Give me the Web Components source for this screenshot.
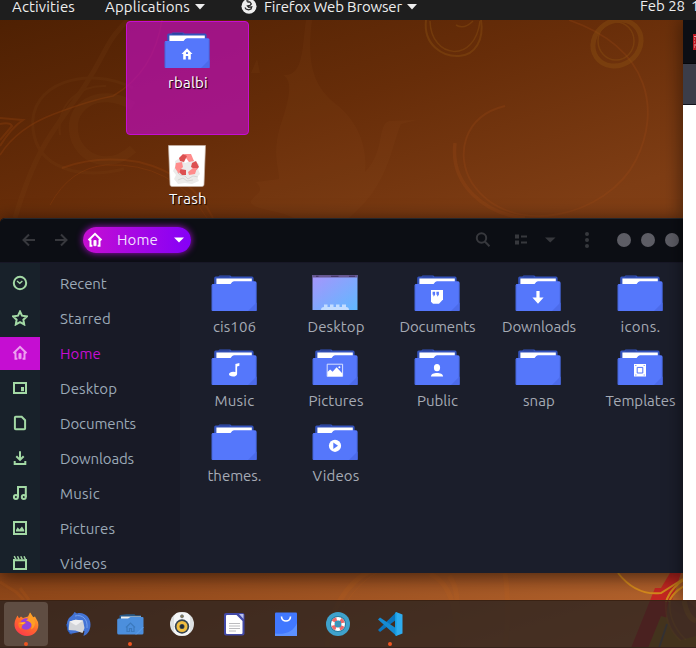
<!DOCTYPE html>
<html lang="en">
<head>
<meta charset="utf-8">
<title>Desktop</title>
<style>
html,body{margin:0;width:696px;height:648px;overflow:hidden;background:#6b2f0a}
body{font:15px/20px Ubuntu,"Noto Sans",sans-serif}
</style>
</head>
<body>
<desk-top></desk-top>
<script>
const define = (name, html, after) => customElements.define(name, class extends HTMLElement {
  connectedCallback() {
    if (this.shadowRoot) return;
    const root = this.attachShadow({mode: 'open'});
    root.innerHTML = typeof html === 'function' ? html(this) : html;
    if (after) after(this, root);
  }
});

/* Text line tracked to a given advance width */
define('fit-text', e => `<style>:host{display:block;white-space:pre;flex:none}span{display:inline-block}</style><span>${e.getAttribute('text')}</span>`, (e, root) => {
  const s = root.querySelector('span'), w = +e.getAttribute('w'), n = e.getAttribute('text').length;
  const gap = (w - s.getBoundingClientRect().width) / n;
  s.style.letterSpacing = gap + 'px';
  e.style.width = w + 'px';
});

const marks = {
  none: '',
  home: '<path d="M17.5 22 23 16.2l5.5 5.8h-1.7v5.500h-2.600V24h-2.400v3.500h-2.600V22z"/><path d="M22 20.300h2v1.800h-2z" fill="#5577fb"/>',
  docs: '<path d="M17 15h12v9.500l-4 4.200h-6l-2-2z"/><path d="M18.600 16.800h2.500v3l-1.200 1.400h-.7l.4-1.400h-1zM22.400 16.800h2.500v3l-1.200 1.400H23l.4-1.400h-1z" fill="#5577fb"/>',
  down: '<path d="M21.400 16h3.200v6.500h4L23 28.700l-5.600-6.200h4z"/>',
  music: '<path d="M24.400 15l4-1v2.800l-2.300.7v7.400c0 1.500-1.700 2.600-4 2.600-2.500 0-4.100-.9-4.100-2.200 0-1.500 2-2.500 4.200-2.500l2.200.3z"/>',
  pics: '<path d="M15.200 15.200h15.400v12.200H15.200z" fill="none" stroke="#dbe2ff" stroke-width="1"/><path d="M15.500 27v-4l2.600-2.500 2.500 2.200 4-4.400 5.800 6.200V27z"/><circle cx="27.400" cy="18.300" r="1"/>',
  user: '<ellipse cx="23" cy="18.700" rx="3.100" ry="3.600"/><path d="M16.900 27.500c0-2.500 3-3.600 6.100-3.600s6.100 1.100 6.100 3.600z"/>',
  tmpl: '<path d="M17 15h12v12.500H17z"/><path d="M20.200 18.400h5.600v5.600h-5.600z" fill="none" stroke="#5577fb"/><path d="M18 16.500h1.500M26.500 16.500H28M18 26h1.500M26.500 26H28" stroke="#5577fb" stroke-width=".6"/>',
  video: '<circle cx="23" cy="21.800" r="6.100"/><path d="M21.300 18.600 26 21.800l-4.700 3.200z" fill="#5577fb"/>'
};
define('folder-icon', e => `<style>:host{display:block;width:46px;height:36px}svg{display:block}</style>
<svg width="46" height="36" viewBox="0 0 46 36">${e.getAttribute('kind') === 'desktop' ?
`<defs><linearGradient id="g" x2="1" y2="1"><stop stop-color="#a795fb"/><stop offset="1" stop-color="#60b8ff"/></linearGradient></defs>
<path d="M.5 0h45v35H.5z" fill="url(#g)"/><path d="M.5 0h45v2.500H.5z" fill="#66578f"/><path d="M4 1.300h2.500M19 1.300h7.500M37 1.300h6" stroke="#3f315f"/><path d="M9 35q0-3 3-3v-2.500h3.500V32h2.500v-2.500h3.500V32H24v-2.500h3.500V32H30v-2.500h4V32q3 0 3 3z" fill="#c3ddff"/>`
: `<path d="M3.200 13V3q0-1.500 1.500-1.500H7.400L8.500.6h10.800l1.200.9H41q1.600 0 1.600 1.700V12z" fill="#3453bd"/><path d="M8.300 1.800h10.400" stroke="#293f91"/><path d="M5.400 3.500h35.400V9H5.400z" fill="#fff"/><path d="M.7 10.300q0-1.300 1.300-1.300h17.600q1.600-2.800 3.300-2.800H44q1.500 0 1.500 1.500V35q0 1-1 1h-43q-.8 0-.8-1z" fill="#5577fb"/><path d="M1 10v25.500M45.200 8v27.500" stroke="#3c5ac5" stroke-width=".6"/><path d="M37 36l8.500-8.500V36z" fill="#4c6bea"/><g fill="#fff">${marks[e.getAttribute('kind')] || ''}</g>`}</svg>`);

define('file-item', e => `<style>:host{display:flex;flex-direction:column;align-items:center;gap:5.500px;color:#a6abb5}fit-text{margin-left:2px}</style>
<folder-icon kind="${e.getAttribute('kind')}"></folder-icon><fit-text text="${e.getAttribute('name')}" w="${e.getAttribute('w')}"></fit-text>`);

const side = {
  Recent: '<circle cx="8" cy="8" r="6.200"/><path d="M5 6l2.800 2.300L10.400 6" stroke-width="1.300"/>',
  Starred: '<path d="M8 1.500l2 4.200 4.900.7-3.500 3.300.8 4.800L8 12.200l-4.200 2.300.8-4.800L1.100 6.400l4.900-.7z"/>',
  Home: '<path d="M1.500 8.300 8 1.800l6.500 6.500M3.500 7.500v6.200h1.900M12.500 7.500v6.200h-1.900"/><path d="M6.900 8.500h2.200v5.200H6.900z" stroke-width=".8" fill="currentColor"/>',
  Desktop: '<path d="M2 3h12v10H2z"/><path d="M9 7h3v4.200H9z" fill="currentColor" stroke="none"/>',
  Documents: '<path d="M2.900 2.500q0-.8.8-.8h6l3.400 3.500v8.200q0 .8-.8.8H3.700q-.8 0-.8-.8z"/>',
  Downloads: '<path d="M8 1.200v8M4.300 6.200 8 9.900l3.700-3.700M2.700 11v3h10.600v-3"/>',
  Music: '<path d="M6 12V2h7.800v10"/><circle cx="3.900" cy="12" r="2"/><circle cx="11.800" cy="12" r="2"/>',
  Pictures: '<path d="M2 2h12v12H2z"/><path d="M4 11.500V10l1.700-2.700 1.700 2.200 2.600-3 2.200 3.500v1.500z" fill="currentColor" stroke="none"/>',
  Videos: '<path d="M2 4v10h12V4M2 5.300h12"/><path d="M2.200 1.200 4 4.500M5.500 1.200 7 4.500M8.800 1.200l1.500 3.300M12 1.200l1.500 3.300" stroke-width="1.500"/>'
};
define('side-row', e => { const n = e.getAttribute('name'); return `<style>
:host{display:grid;grid-template-columns:40px 140px;height:33px;padding:1px 0;color:#9ba9b7}
.i{display:flex;align-items:center;justify-content:center;color:#a3d9a5;box-sizing:border-box;padding-bottom:1px}.l{display:flex;align-items:center;padding-left:20px}
:host([on]) .i{background:#c50ed2;color:#eda0f0}:host([on]) .l{color:#c50ed2}svg{fill:none;stroke:currentColor;stroke-width:2}
</style><div class="i"><svg width="16" height="16">${side[n]}</svg></div><div class="l"><fit-text text="${n}" w="${e.getAttribute('w')}"></fit-text></div>`; });

define('head-bar', `<style>
:host{display:flex;align-items:center;height:45px;background:#0c0e14;box-sizing:border-box;border-top:1px solid #23262c;border-bottom:1px solid #181827;padding:0 0 2px 22px;border-radius:5px 0 0 0;color:#37383d}
svg{display:block;fill:none;stroke:currentColor;stroke-width:2;flex:none}
.pill{display:flex;align-items:center;width:108px;height:26px;border-radius:13px;margin-left:15px;background:linear-gradient(90deg,#c50ed2,#8500f7);box-shadow:0 0 7px #a30ecb;color:#fff;box-sizing:border-box;padding-left:4px;gap:14px}
.pill fit-text{color:#f0dfff}.pill svg:last-child{margin-left:2px}.tools{display:flex;align-items:center;margin-left:auto;width:208px}
.dots{display:flex;gap:10px;margin-left:28px}.dots i{width:14px;height:14px;border-radius:50%;background:#5d5d65}
</style>
<svg width="15" height="14"><path d="M7 1.500 1.500 7 7 12.500M1.500 7H13"/></svg>
<svg width="15" height="14" style="margin-left:16px"><path d="M8 1.500 13.500 7 8 12.500M13.500 7H2"/></svg>
<div class="pill"><svg width="16" height="16">${side.Home}</svg><fit-text text="Home" w="41"></fit-text><svg width="10" height="6"><path d="M0 .5h10L5 5.500z" fill="#fff" stroke="none"/></svg></div>
<div class="tools"><svg width="16" height="16"><circle cx="6.500" cy="6" r="4.700"/><path d="M9.800 9.500l4.700 4.700"/></svg>
<svg width="12" height="11" style="margin-left:24px"><path d="M0 .5h4v4H0zM0 6.500h4v4H0zM6 1.500h6v2H6zM6 7.500h6v2H6z" fill="currentColor" stroke="none"/></svg>
<svg width="11" height="6" style="margin-left:18px"><path d="M0 .5h10.500L5.200 5.500z" fill="currentColor" stroke="none"/></svg>
<svg width="4" height="18" style="margin-left:29px"><g fill="currentColor" stroke="none"><circle cx="2" cy="3" r="2"/><circle cx="2" cy="9" r="2"/><circle cx="2" cy="15" r="2"/></g></svg>
<div class="dots"><i></i><i></i><i></i></div></div>`);

const sideRows = [['Recent',46.5],['Starred',51],['Home',41],['Desktop',57],['Documents',76],['Downloads',74],['Music',40],['Pictures',55],['Videos',47]];
const files = [['cis106','none',43],['Desktop','desktop',57],['Documents','docs',76],['Downloads','down',74],['icons.','none',40],['Music','music',40],['Pictures','pics',55],['Public','user',41],['snap','none',32],['Templates','tmpl',70],['themes.','none',54],['Videos','video',47]];
define('files-window', `<style>
:host{display:flex;flex-direction:column;width:683px;height:355px;overflow:hidden;border-radius:5px 0 0 0;background:#0c0e14}
.body{display:flex;flex:1;min-height:0}
.side{width:180px;flex:none;box-sizing:border-box;padding-top:3px;overflow:hidden;background:linear-gradient(90deg,#18212a 40px,#181a26 40px)}
.grid{flex:1;box-sizing:border-box;background:#1b1e2b;display:grid;grid-template-columns:101px 102px 101px 102px 101px;grid-template-rows:74px 75px 75px;padding:12px 0 0 3px;align-content:start}
</style><head-bar></head-bar><div class="body"><div class="side">${sideRows.map(([n,w])=>`<side-row name="${n}" w="${w}" ${n==='Home'?'on':''}></side-row>`).join('')}</div>
<div class="grid">${files.map(([n,k,w])=>`<file-item name="${n}" kind="${k}" w="${w}"></file-item>`).join('')}</div></div>`);

define('top-bar', `<style>
:host{display:flex;height:20px;background:#1e1e1e;color:#eee;box-sizing:border-box;padding-left:12px;align-items:flex-start;line-height:14px}
svg{display:block;flex:none}.date{line-height:12px}
</style><fit-text text="Activities" w="63"></fit-text>
<fit-text text="Applications" w="85" style="margin-left:30px"></fit-text><svg width="10" height="6" style="margin:4px 0 0 5px"><path d="M0 0h10L5 5.500z" fill="#eee"/></svg>
<svg width="16" height="16" viewBox="0 0 16 16" style="margin:-2px 0 0 36px"><circle cx="8" cy="8.300" r="7.500" fill="#eee"/><path d="M5.500 0l.8 3.500 2.700.5 1.300 2-1.300 1.500-2.500.5 1.200 1.300 3-.5-.7 2.200-2.500.8-2.500-.8-1-1.500" fill="none" stroke="#292929" stroke-width="1.300"/><path d="M6 1l2 2 1.500 2-3-.3z" fill="#555"/></svg>
<fit-text text="Firefox Web Browser" w="138" style="margin-left:7px"></fit-text><svg width="10" height="6" style="margin:4px 0 0 5px"><path d="M0 0h10L5 5.500z" fill="#eee"/></svg>
<fit-text class="date" text="Feb 28" w="45" style="margin-left:223px"></fit-text><fit-text class="date" text="1" w="8" style="margin-left:6px"></fit-text>`);

const apps = {
firefox: '<defs><linearGradient id="f" x1=".8" x2=".2" y2="1"><stop stop-color="#ffb02b"/><stop offset=".5" stop-color="#ff6a2b"/><stop offset="1" stop-color="#ff354f"/></linearGradient></defs><path d="M3.500 3.500 5 6.200l2-1.700L9 6l5-1.500 2-4 2.500 5 2.500-1 3 5.500c2 8-4 14-11 14S0 18 .5 12c.2-3.500 1.500-6 3-8.500z" fill="url(#f)"/><circle cx="12" cy="12" r="5.800" fill="#9342dd"/><path d="M16 .5c2 2.500 5 6.500 5 11 0 3-2 5-4 6 2-5 0-8-5-9 2-1 4-4 4-8z" fill="#ff9e25"/><path d="M4.500 10.500l6-.8 1.500 1.300-3.500 2-1.500 4c-3-2-3-4.500-2.500-6.500z" fill="#ff7b25"/><path d="M4.500 11l7-.7-2.500 2z" fill="#ffc13b"/>',
bird: '<path d="M8.500 0l2.500 1.500C18-.5 24.500 5 24.500 12.500c0 6-3 10-7 11.500l1-5L4 22C0 17 0 10 3 6c2-2 4-3 5.500-6z" fill="#4474d5"/><path d="M9 4c7-2 13 3 12 12" fill="none" stroke="#75a0ed"/><path d="M3.500 9.500l6-1.800 7.500.8 1.500 7.500-2 5L9.500 18.500 2.500 18z" fill="#d3d5d9"/><path d="M3.500 9.500l6-1.800 7.500.8-7 5z" fill="#f0f0f1"/><path d="M.7 12l1.500 7 3 3.500" fill="none" stroke="#2858b1"/>',
folder: '<path d="M1.500 8V4q0-1 1-1l6-.8h8l1 1H23V8z" fill="#285987"/><path d="M3 4.500h20V8H3z" fill="#eee"/><path d="M-.8 8q0-1.500 1.500-1.500H10L12.500 5h12q1 0 1 1v15q0 1.500-1.500 1.500H.8q-1.600 0-1.600-1.500z" fill="#4c8fdd"/><path d="M8 15.500l4.500-4.500 4.500 4.500M9 15v4.500h2.500v-3h2v3H16V15" fill="none" stroke="#3b79bd" stroke-width="1.200"/><path d="M18 22.500 25.500 15" stroke="#5da1ee"/>',
speaker: '<circle cx="12" cy="12" r="12" fill="#dde1e2"/><rect x="4" y=".5" width="16" height="23" rx="5" fill="#f5f6f7"/><circle cx="12" cy="14.500" r="7.200" fill="#364451"/><circle cx="12" cy="14.500" r="4" fill="none" stroke="#f0bd40" stroke-width="3"/><circle cx="12" cy="14.500" r="1.700" fill="#202b34"/><circle cx="12" cy="4.300" r="1.500" fill="#887b50" stroke="#677078" stroke-width=".8"/>',
doc: '<rect x="2" y="1" width="20.500" height="22.500" rx="2" fill="#4149a7"/><path d="M4 4q0-1 1-1h9.500l6 6v12q0 1-1 1H5q-1 0-1-1z" fill="#fff"/><path d="M17 2l4.500 5V2z" fill="#b9c0ec"/><path d="M7 11.500h11M7 14h11M7 16.500h11M7 19h7" stroke="#bcbcbf" stroke-width="1"/>',
bag: '<rect x="1" y=".5" width="22" height="23.500" rx="1" fill="#4178ff"/><path d="M1 21.500C12 23 20 19 23 11v13H1z" fill="#5c91ff"/><path d="M7.500 4.500c0 6 9 6 9 0" fill="none" stroke="#fff" stroke-width="1.600"/>',
help: '<circle cx="12" cy="12" r="12" fill="#3fa2cc"/><circle cx="12" cy="12" r="8" fill="#287b9d"/><circle cx="12" cy="12" r="5.200" fill="none" stroke="#fff" stroke-width="3.600"/><circle cx="12" cy="12" r="5.200" fill="none" stroke="#ee6868" stroke-width="3.600" stroke-dasharray="4.080 4.080" stroke-dashoffset="-2.040"/><rect x="9" y="9" width="6" height="6" rx="1" fill="#3995ba"/>',
code: '<path d="M18.500 0v7.500L2 20l-2-2z" fill="#0b75bd"/><path d="M2 5.500 18.500 16.500V24L0 7.500z" fill="#168bd2"/><path d="M18 0l6.500 2.500v19L18 24z" fill="#2eacef"/><path d="M17 .8 18.500 0v24L17 23.200z" fill="#169ce0"/>'
};
define('dock-item', e => `<style>:host{position:relative;display:flex;align-items:center;justify-content:center;width:44px;height:44px;border-radius:4px;box-sizing:border-box}
:host([on]){background:#5f4d42}:host([run])::after{content:"";position:absolute;left:20px;bottom:0;width:4px;height:4px;border-radius:2px;background:#ee5421}svg{overflow:visible}</style><svg width="24" height="24" viewBox="0 0 24 24">${apps[e.getAttribute('app')]}</svg>`);
define('dock-bar', `<style>:host{display:flex;gap:8px;padding:1px 4px 2px;height:48px;box-sizing:border-box;background:rgba(35,31,31,.76);border-top:1px solid #3a2213;border-bottom:1px solid #35241c}</style>
${Object.keys(apps).map(a=>`<dock-item app="${a}" ${a==='firefox'?'on':''} ${['firefox','folder','code'].includes(a)?'run':''}></dock-item>`).join('')}`);

define('wall-paper', `<style>:host{display:block;width:696px;height:648px}svg{display:block}</style>
<svg width="696" height="648"><defs><linearGradient id="w" gradientUnits="userSpaceOnUse" x1="0" y1="0" x2="240" y2="760"><stop stop-color="#4c1f02"/><stop offset=".25" stop-color="#672d09"/><stop offset=".46" stop-color="#7e3d14"/><stop offset=".7" stop-color="#8c4518"/><stop offset="1" stop-color="#b5642e"/></linearGradient></defs>
<rect width="696" height="648" fill="url(#w)"/>
<g fill="none" stroke="#8a3d0d" opacity=".42">
<path d="M0 118l23 2Q11 128 0 146M0 124q10-2 12 2L0 140" stroke-width="2"/>
<path d="M0 155Q17 128 54 114T113 96Q154 72 162 20" stroke-width="1.600"/>
<path d="M62 168q35-13 77-6 53 13 74 56" stroke-width="2"/><path d="M50 205q20-37 56-40 67-3 101 53"/></g>
<g fill="none" stroke="#a04b17" opacity=".26"><path d="M505 106c-42 10-50 50-33 77 39 58 136 33 164-23 24-48 16-111-67-140" stroke-width="1.800"/><path d="M455 143c-5 42 30 71 70 75" stroke-width="3.500"/></g>
<g fill="none" stroke="#89501e" opacity=".12"><path d="M15 218C38 140 59 125 84 87S103 45 128 20" stroke-width="5"/><path d="M133 88C87 65 28 83 33 129c4 39 46 51 91 40" stroke-width="3"/><path d="M133 149c-20 19-46 14-57-8-13-34 23-56 57-35" stroke-width="9"/><path d="M60 135c-4-32 20-50 46-49" stroke-width="2"/></g>
<g fill="#9a5826" opacity=".09"><path d="M283 75c12 7 4 30-3 52-8 27-1 41-1 52l-23 3c9 10 1 10-5 19-3 8 28 9 43 17h55c40-33 42-71 52-94l16-4-28 1c-12 4-4 31-24 51 3-27-9-52-28-67-22-17-31-38-25-85h-6c-4 27-2 57-23 55z"/><path d="M257 59l3 14h-9z"/></g>
<g fill="none" stroke="#8b5012" opacity=".42"><path d="M426 20c-3 25 17 37 33 36 17-1 25-17 22-36" stroke-width="2"/><path d="M430 21c1 38 45 43 50 0M456 25q8 5 17-4" stroke-width="1.500"/><ellipse cx="617" cy="43" rx="25" ry="22" stroke-width="5" transform="rotate(-35 617 43)"/><ellipse cx="616" cy="41" rx="18" ry="19" stroke-width="1.500"/></g>
<g fill="none" stroke="#c6661a" opacity=".16"><path d="M0 582l16 10 8 8M20 588l9 12" stroke-width="3"/><path d="M372 570c-27 13-44 43-45 78M430 574c22 9 28 41 27 74M449 576c13 15 6 42 9 72M505 573q5 32 0 75" stroke-width="5"/><path d="M383 570c-30 12-50 48-52 78"/></g>
<path d="M670 573h11l-5 15-11 34-12 26h-22l24-60h6z" fill="#c42722"/><path d="M661 616l-13 32h48v-22z" fill="#a97018"/><path d="M669 600h18l9 8v28l-15 4q-20-15-12-40z" fill="#a0542c"/><g fill="none" stroke="#d58a1c"><path d="M618 573q18 23 43 20l22-14" stroke-width="2"/><path d="M696 575c-20 5-28 20-30 27M696 582c-15 3-24 12-27 20" stroke-width="2"/><path d="M666 601q-2 25 15 40M670 601q-2 22 16 39" stroke-width="1.500" opacity=".4"/><path d="M684 600q3 18 12 21" stroke-width="5" opacity=".5"/></g>
<path d="M667 624l-8 24" stroke="#63676c" stroke-width="2"/></svg>`);

define('browser-edge', `<style>:host{display:flex;flex-direction:column;width:13px;height:580px;background:#fff}
.t{height:44px;background:#0c0e14;box-sizing:border-box;padding:14px 0 0 10px;border-bottom:1px solid #06070a}.u{height:41px;box-sizing:border-box;background:#3b3d49;border-bottom:1px solid #11121b}
.r{width:3px;height:16px;background:#bd1824;overflow:hidden}.r svg{display:block}</style><div class="t"><div class="r"><svg width="3" height="16"><path d="M1 2.500h2M1 5h1M1 8h1M1 11h2M1 13h1" stroke="#e9a8aa"/></svg></div></div><div class="u"></div>`);

define('desk-icon', `<style>:host{display:flex;flex-direction:column;align-items:center;box-sizing:border-box;color:#fff;text-shadow:1px 1px 1px #000}:host([on]){background:rgba(187,14,181,.72);border:1px solid #c50ed2;border-radius:4px}</style><slot></slot>`);
const trash = `<svg width="38" height="42" viewBox="0 0 38 42"><path d="M.5.500h37l-1.500 39q0 2-2 2H4q-2 0-2-2z" fill="#fff" stroke="#c5b2a6" stroke-width=".7"/><path d="M7 16l5-3 5 5 8-3 6 4-1 5 2 5-3 3 2 4-7 3-7-1-7 1-4-5 2-4-3-4 2-4z" fill="#ecebea"/><path d="M9 27l3 3 5 1 3 3 5-3 5 1M10 35l5-2 4 3 6-1" stroke="#d8d6d4" fill="none"/><path d="M16 9h7l3 7-5 1-3-4z" fill="#ff8c8c"/><path d="M11 13l4-4 4 2-3 6-4-1z" fill="#dc5050"/><path d="M24 18l4-2 3 6-3 3-5-3z" fill="#dc5050"/><path d="M29 23l-2 6-6 1-1-3 5-4z" fill="#ff8c8c"/><path d="M12 24l6 1v5h-4l-3-3z" fill="#dc5050"/><path d="M8 18l6-1 1 5-3 3-1 4-4-6z" fill="#ff8c8c"/></svg>`;
define('desk-top', `<style>
:host{display:block;position:relative;width:696px;height:648px;overflow:hidden}
:host>*{position:absolute}wall-paper{left:0;top:0}top-bar{left:0;top:0;width:696px;z-index:9}
#home{left:126px;top:21px;width:123px;height:114px;padding:10px 1px 0 0;gap:5px}#home fit-text{margin-left:2px}#trash{left:126px;top:145px;width:122px;gap:2px}#trash fit-text{margin-left:2px}
files-window{left:0;top:218px;box-shadow:0 3px 18px 1px rgba(10,4,0,.6)}
browser-edge{left:683px;top:20px;box-shadow:0 0 18px 1px rgba(0,0,0,.5)}dock-bar{left:0;top:600px;width:696px;z-index:8}
</style><wall-paper></wall-paper>
<desk-icon id="home" on><folder-icon kind="home"></folder-icon><fit-text text="rbalbi" w="40"></fit-text></desk-icon>
<desk-icon id="trash">${trash}<fit-text text="Trash" w="38"></fit-text></desk-icon>
<files-window></files-window><browser-edge></browser-edge><top-bar></top-bar><dock-bar></dock-bar>`);
</script>
</body>
</html>
